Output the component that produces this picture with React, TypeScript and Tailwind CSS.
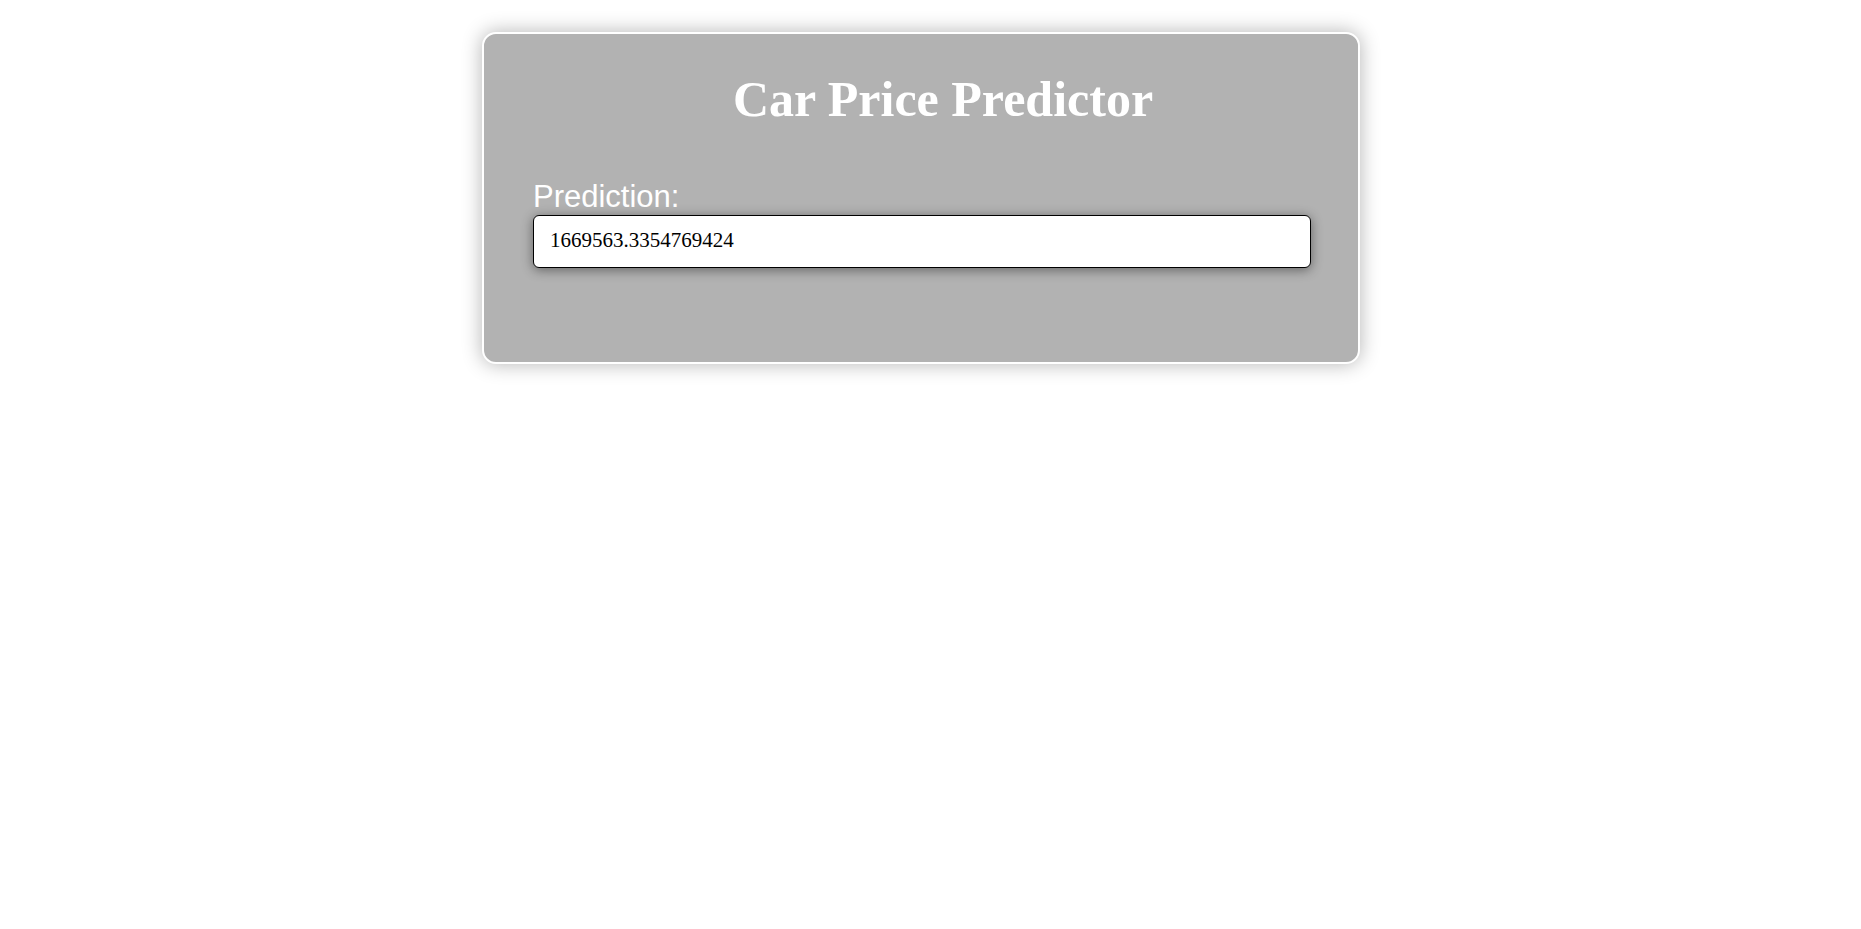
export default function App() {
  const prediction = "1669563.3354769424";

  return (
    <div className="min-h-screen bg-white flex justify-center pr-[19px] pt-[32px]">
      <div className="w-[878px] h-fit bg-[#b2b2b2] border-2 border-white rounded-[14px] shadow-[0_0_20px_rgba(0,0,0,0.3)] pl-[49px] pr-[47px] pt-[37px] pb-[94px]">
        <h1 className="text-center pl-[42px] text-white font-bold text-[50px] leading-[56px] font-['Liberation_Serif','Times_New_Roman',serif]">
          Car Price Predictor
        </h1>
        <div className="flex flex-col mt-[53px]">
          <label className="text-white text-[31px] leading-[34px] font-['Liberation_Sans',Arial,sans-serif]">
            Prediction:
          </label>
          <div className="mt-[1px] h-[53px] flex items-center pl-[16px] pb-[2px] bg-white border border-black rounded-[6px] shadow-[0_2px_12px_rgba(0,0,0,0.45)] text-[21px] text-black font-['Liberation_Serif','Times_New_Roman',serif]">
            {prediction}
          </div>
        </div>
      </div>
    </div>
  );
}
